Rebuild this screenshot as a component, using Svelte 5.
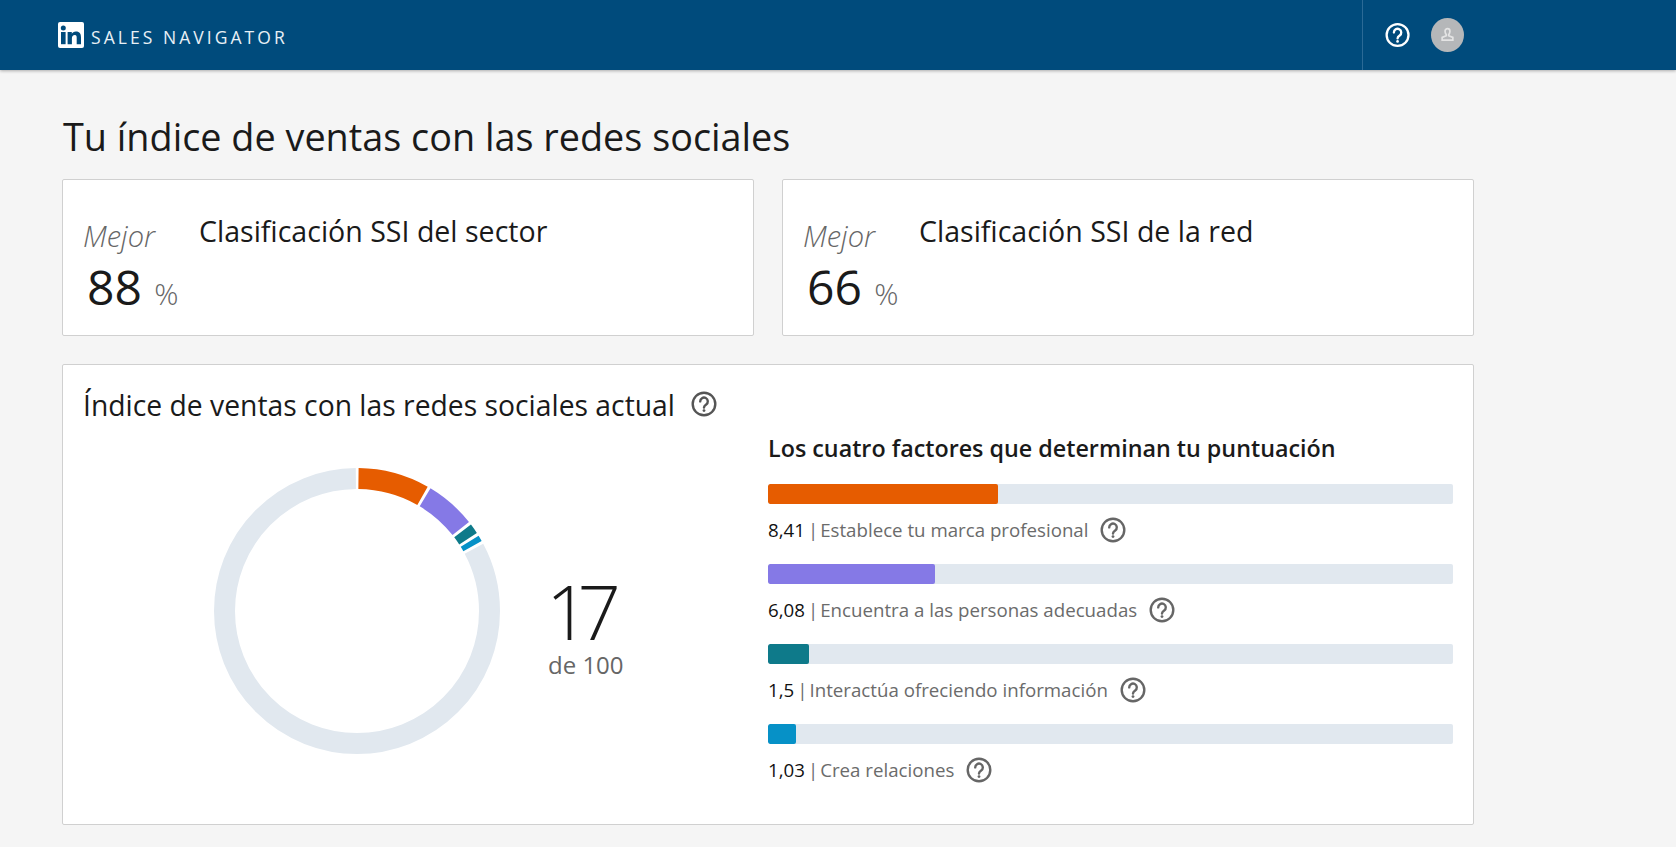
<script>
  const factors = [
    { value: '8,41', label: 'Establece tu marca profesional', pct: 33.64, color: '#e65c00' },
    { value: '6,08', label: 'Encuentra a las personas adecuadas', pct: 24.32, color: '#8579e6' },
    { value: '1,5', label: 'Interactúa ofreciendo información', pct: 6, color: '#0e7a8a' },
    { value: '1,03', label: 'Crea relaciones', pct: 4.12, color: '#0691c7' }
  ];
  const R = 132.5;
  const C = 2 * Math.PI * R;
  const gap = 3;
  let acc = 0;
  const segs = [8.41, 6.08, 1.5, 1.03].map((v, i) => {
    const len = (v / 100) * C;
    const s = { len: len - gap, off: -(acc + gap / 2), color: factors[i].color };
    acc += len;
    return s;
  });
  const restLen = C - acc - gap;
  const restOff = -(acc + gap / 2);
</script>

{#snippet help(cls)}
  <svg class={cls} viewBox="0 0 26 26" fill="none" stroke="currentColor" stroke-width="2.4" aria-hidden="true">
    <circle cx="13" cy="13" r="11.3" />
    <path d="M9.200 10.400a3.800 3.800 0 1 1 6 3.100c-1.300.9-2.200 1.600-2.200 3" stroke-linecap="round" />
    <circle cx="13" cy="19.600" r="1.400" fill="currentColor" stroke="none" />
  </svg>
{/snippet}

<header class="top">
  <div class="brand">
    <svg class="logo" viewBox="0 0 26 26" aria-hidden="true">
      <rect width="26" height="26" rx="2" fill="#fff" />
      <rect x="3" y="10" width="4.600" height="12.200" fill="#004b7c" />
      <circle cx="5.300" cy="6" r="2.500" fill="#004b7c" />
      <path d="M9.600 10h4.200v1.800c.6-1.100 2.100-2.200 4.100-2.200 4 0 5.100 2.500 5.100 5.900v6.700h-4.300v-6c0-1.500 0-3.100-1.900-3.100s-2.900 1.500-2.900 3.100v6H9.600z" fill="#004b7c" />
    </svg>
    <span class="product">SALES NAVIGATOR</span>
  </div>
  <div class="tools">
    {@render help('help-top')}
    <div class="avatar">
      <svg viewBox="0 0 14 14" fill="none" stroke="#e4e4e4" stroke-width="1.400" aria-hidden="true">
        <path d="M5 3.400a2 2 0 1 1 4 0c0 1.200-.6 2.300-1 3v.8l3.400 1.400v2.200H2.600V8.600L6 7.200v-.8c-.4-.7-1-1.800-1-3z" />
      </svg>
    </div>
  </div>
</header>

<main class="page">
  <h1>Tu índice de ventas con las redes sociales</h1>

  <div class="ranks">
    <section class="card rank">
      <div class="score">
        <em>Mejor</em>
        <div class="num">88 <span>%</span></div>
      </div>
      <h2>Clasificación SSI del sector</h2>
    </section>
    <section class="card rank">
      <div class="score">
        <em>Mejor</em>
        <div class="num">66 <span>%</span></div>
      </div>
      <h2>Clasificación SSI de la red</h2>
    </section>
  </div>

  <section class="card current">
    <div class="current-title">
      <h2>Índice de ventas con las redes sociales actual</h2>
      {@render help('help-title')}
    </div>
    <div class="columns">
      <div class="chart">
        <svg class="ring" viewBox="0 0 286 286" aria-hidden="true">
          <g transform="rotate(-90 143 143)" fill="none" stroke-width="21">
            <circle cx="143" cy="143" r={R} stroke="#e1e8ef" stroke-dasharray="{restLen} {C}" stroke-dashoffset={restOff} />
            {#each segs as s}
              <circle cx="143" cy="143" r={R} stroke={s.color} stroke-dasharray="{s.len} {C}" stroke-dashoffset={s.off} />
            {/each}
          </g>
        </svg>
        <div class="total">
          <div class="big">17</div>
          <div class="of">de 100</div>
        </div>
      </div>
      <div class="factors">
        <h3>Los cuatro factores que determinan tu puntuación</h3>
        {#each factors as f}
          <div class="factor">
            <div class="track"><div class="fill" style="width:{f.pct}%;background:{f.color}"></div></div>
            <div class="legend">
              <span class="val">{f.value}</span><span class="sep">|</span><span class="lab">{f.label}</span>
              {@render help('help-row')}
            </div>
          </div>
        {/each}
      </div>
    </div>
  </section>
</main>

<style>
  :global(body) {
    margin: 0;
    background: #f5f5f5;
    font-family: "Open Sans", "Noto Sans", sans-serif;
    color: #1a1a1a;
  }
  .top {
    height: 70px;
    background: #004b7c;
    box-shadow: 0 1px 3px rgba(0, 0, 0, .3);
    display: flex;
    justify-content: space-between;
    width: 100%;
    padding: 0 212px 0 58px;
    box-sizing: border-box;
  }
  .brand { display: flex; align-items: flex-start; padding-top: 22px; }
  .logo { width: 26px; height: 26px; }
  .product {
    font-size: 17.5px;
    letter-spacing: 3.05px;
    color: #e8f0f6;
    margin-left: 7px;
    line-height: 30px;
    white-space: nowrap;
  }
  .tools {
    display: flex;
    align-items: center;
    width: 102px;
    border-left: 1px solid #2b6a96;
    box-sizing: border-box;
    padding-left: 22px;
    gap: 21px;
  }
  .help-top { width: 26px; height: 26px; color: #fff; }
  .avatar {
    width: 34px; height: 34px;
    border-radius: 50%;
    background: #b5b7b9;
    display: flex; align-items: center; justify-content: center;
  }
  .avatar svg { width: 17px; height: 17px; }
  .page { width: 1412px; margin-left: 62px; }
  h1 {
    font-weight: 400;
    font-size: 37.8px;
    line-height: 50px;
    margin: 0;
    padding: 42px 0 17px;
    color: #1a1a1a;
    white-space: nowrap;
    text-indent: 1px;
  }
  h2 { font-weight: 400; margin: 0; white-space: nowrap; }
  .card {
    background: #fff;
    border: 1px solid #d0d0d0;
    border-radius: 2px;
    box-sizing: border-box;
  }
  .ranks { display: grid; grid-template-columns: 692px 692px; gap: 28px; }
  .rank { height: 157px; display: flex; padding: 32px 20px 0; }
  .score { width: 116px; flex: none; padding-top: 6px; }
  .score em { display: block; font-size: 29px; line-height: 36px; color: #666; font-weight: 300; }
  .num { font-size: 48px; line-height: 65px; margin-left: 4px; white-space: nowrap; font-weight: 400; }
  .num span { font-size: 30px; color: #666; font-weight: 300; }
  .rank h2 { font-size: 28.55px; line-height: 38px; }
  .current { margin-top: 28px; height: 461px; padding: 21px 20px 0; }
  .current-title { display: flex; align-items: center; gap: 16px; }
  .current-title h2 { font-size: 28.3px; line-height: 38px; }
  .help-title { width: 26px; height: 26px; color: #555; margin-top: -2px; }
  .columns { display: flex; }
  .chart { width: 685px; flex: none; display: flex; align-items: center; padding-left: 131px; box-sizing: border-box; height: 373px; }
  .ring { width: 286px; height: 286px; flex: none; }
  .total { margin: 32px 0 0 48px; text-align: left; }
  .big { font-size: 76px; line-height: 76px; font-weight: 300; letter-spacing: -12px; margin-left: -2px; }
  .of { font-size: 24px; line-height: 32px; color: #666; }
  .factors { width: 685px; flex: none; }
  h3 { font-size: 23.3px; font-weight: 600; line-height: 32px; margin: 0; padding: 8px 0 20px; white-space: nowrap; }
  .factor { height: 80px; }
  .track { height: 20px; background: #e1e8ef; border-radius: 2px; overflow: hidden; }
  .fill { height: 100%; border-radius: 2px; }
  .legend { display: flex; align-items: center; height: 51px; font-size: 18.7px; white-space: nowrap; }
  .val { color: #111; }
  .sep { margin: 0 2px 0 3px; }
  .sep, .lab { color: #6b6b6b; }
  .help-row { width: 26px; height: 26px; color: #666; margin-left: 12px; flex: none; }
</style>
